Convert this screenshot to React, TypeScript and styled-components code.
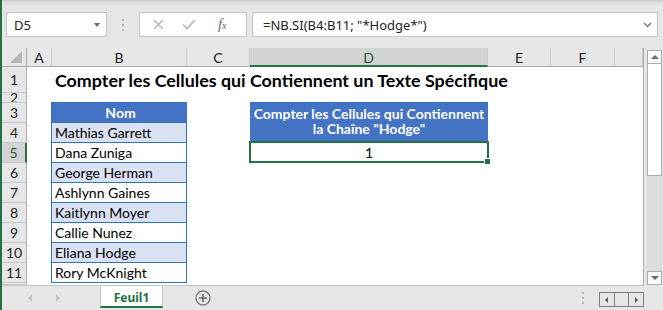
import React from "react";
import styled, { createGlobalStyle } from "styled-components";

const GREEN = "#217346";
const BLUE = "#2f75b5";
const HEAD_BG = "#e6e6e6";
const HEAD_SEL = "#d2d2d2";
const SEP = "#c8c8c8";
const CELL_FONT = `"Lato", "Liberation Sans", sans-serif`;
const UI_FONT = `"Noto Sans", "Open Sans", sans-serif`;

const Global = createGlobalStyle`
  html, body { margin: 0; padding: 0; overflow: hidden; background: #e6e6e6; }
  * { box-sizing: border-box; }
`;

const Window = styled.div`
  width: 663px;
  height: 310px;
  display: flex;
  background: #e6e6e6;
  overflow: hidden;
`;

const Edge = styled.div`
  width: 2px;
  flex: none;
  background: ${GREEN};
`;

const Main = styled.div`
  flex: 1;
  display: flex;
  flex-direction: column;
  min-width: 0;
`;

/* ---------- formula bar ---------- */
const FormulaBar = styled.div`
  height: 48px;
  flex: none;
  display: flex;
  align-items: flex-start;
  padding: 12px 0 0 4px;
  background: linear-gradient(to bottom, #c9c9c9 0px, #dadada 2px, #e6e6e6 5px);
`;

const Box = styled.div`
  height: 25px;
  background: #ffffff;
  border: 1px solid #c6c6c6;
  display: flex;
  align-items: center;
`;

const NameBox = styled(Box)`
  width: 101px;
  padding: 0 6px 0 7px;
  justify-content: space-between;
  font-family: ${UI_FONT};
  font-size: 13px;
  color: #222;
`;

const DropArrow = styled.span`
  width: 0;
  height: 0;
  border-left: 3.5px solid transparent;
  border-right: 3.5px solid transparent;
  border-top: 4px solid #6a6a6a;
  margin-top: 1px;
`;

const Grip = styled.div`
  width: 32px;
  height: 25px;
  display: flex;
  flex-direction: column;
  align-items: center;
  justify-content: center;
  gap: 3px;
`;

const GripDot = styled.span`
  width: 2px;
  height: 2px;
  background: #b4b4b4;
`;

const FuncBox = styled(Box)`
  width: 108px;
  padding-left: 12px;
  gap: 0;
`;

const FuncIcon = styled.span<{ $w: number }>`
  width: ${(p) => p.$w}px;
  height: 23px;
  display: flex;
  align-items: center;
  justify-content: center;
`;

const Fx = styled.span`
  font-family: "Liberation Serif", serif;
  font-style: italic;
  font-size: 15px;
  color: #6b6b6b;
  letter-spacing: -0.5px;
  & > small {
    font-size: 11px;
  }
`;

const FormulaInput = styled(Box)`
  margin-left: 5px;
  width: 406px;
  padding: 0 5px 0 10px;
  justify-content: space-between;
  font-family: ${UI_FONT};
  font-size: 13px;
  color: #222;
  white-space: pre;
`;

/* ---------- sheet ---------- */
const SheetArea = styled.div`
  height: 238px;
  flex: none;
  display: flex;
`;

const Grid = styled.div`
  width: 642px;
  height: 238px;
  flex: none;
  display: grid;
  grid-template-columns: 25px 25px 135px 63px 238px 63px 64px 1fr;
  grid-template-rows: 19px 26px 10px repeat(9, 20px) 1fr;
  background: #ffffff;
  border-right: 1px solid #ababab;
  border-bottom: 1px solid #c6c6c6;
  overflow: hidden;
`;

const Corner = styled.div`
  grid-column: 1;
  grid-row: 1;
  background: ${HEAD_BG};
  border-right: 1px solid #ababab;
  border-bottom: 1px solid #ababab;
  position: relative;
  display: flex;
  align-items: flex-end;
  justify-content: flex-end;
  padding: 0 4px 3px 0;
`;

const ColHeader = styled.div<{ $col: number; $sel?: boolean }>`
  grid-column: ${(p) => p.$col};
  grid-row: 1;
  background: ${(p) => (p.$sel ? HEAD_SEL : HEAD_BG)};
  border-right: 1px solid ${SEP};
  border-bottom: ${(p) => (p.$sel ? `2px solid ${GREEN}` : "1px solid #ababab")};
  display: flex;
  align-items: center;
  justify-content: center;
  font-family: ${CELL_FONT};
  font-size: 14px;
  color: ${(p) => (p.$sel ? "#1d5c38" : "#222")};
  padding-top: ${(p) => (p.$sel ? "1px" : "0")};
`;

const RowHeader = styled.div<{ $row: number; $sel?: boolean }>`
  grid-column: 1;
  grid-row: ${(p) => p.$row};
  background: ${(p) => (p.$sel ? HEAD_SEL : HEAD_BG)};
  border-bottom: 1px solid ${SEP};
  border-right: ${(p) => (p.$sel ? `2px solid ${GREEN}` : "1px solid #ababab")};
  display: flex;
  align-items: center;
  justify-content: center;
  overflow: hidden;
  font-family: ${CELL_FONT};
  font-size: 14px;
  line-height: 20px;
  color: ${(p) => (p.$sel ? "#1d5c38" : "#222")};
`;

const Title = styled.div`
  grid-column: 3 / 8;
  grid-row: 2;
  padding-left: 3px;
  font-family: ${CELL_FONT};
  font-weight: 700;
  font-size: 17.85px;
  line-height: 26px;
  color: #000;
  white-space: nowrap;
`;

const NameTable = styled.div`
  grid-column: 3;
  grid-row: 4 / span 9;
  margin: -1px 0 0 -1px;
  border: 1px solid ${BLUE};
  border-bottom: none;
  display: flex;
  flex-direction: column;
`;

const NameRow = styled.div<{ $kind: "head" | "band" | "plain" }>`
  height: 20px;
  flex: none;
  border-bottom: 1px solid ${BLUE};
  padding-left: 3px;
  font-family: ${CELL_FONT};
  font-size: 14px;
  line-height: 19px;
  white-space: nowrap;
  background: ${(p) => (p.$kind === "head" ? "#4472c4" : p.$kind === "band" ? "#d9e1f2" : "#ffffff")};
  color: ${(p) => (p.$kind === "head" ? "#ffffff" : "#000")};
  font-weight: ${(p) => (p.$kind === "head" ? 700 : 400)};
  text-align: ${(p) => (p.$kind === "head" ? "center" : "left")};
`;

const ResultHeader = styled.div`
  grid-column: 5;
  grid-row: 4 / span 2;
  margin-top: -1px;
  background: #4472c4;
  border-top: 1px solid ${BLUE};
  padding-top: 3px;
  font-family: ${CELL_FONT};
  font-weight: 700;
  font-size: 14px;
  line-height: 15px;
  color: #ffffff;
  text-align: center;
  white-space: nowrap;
`;

const ResultCell = styled.div`
  grid-column: 5;
  grid-row: 6;
  position: relative;
  font-family: ${CELL_FONT};
  font-size: 14px;
  line-height: 20px;
  text-align: center;
  color: #000;
`;

const Selection = styled.div`
  position: absolute;
  top: -2px;
  left: -1px;
  right: -1px;
  bottom: 0;
  border: 2px solid ${GREEN};
  pointer-events: none;
`;

const FillHandle = styled.span`
  position: absolute;
  right: -3px;
  bottom: -3px;
  width: 5px;
  height: 5px;
  background: ${GREEN};
  outline: 1px solid #ffffff;
`;

/* ---------- vertical scrollbar ---------- */
const VScroll = styled.div`
  width: 15px;
  height: 235px;
  margin: 2px 0 0 3px;
  display: flex;
  flex-direction: column;
  background: #dcdcdc;
`;

const ScrollButton = styled.div`
  height: 14px;
  flex: none;
  background: #fafafa;
  border: 1px solid #ababab;
  display: flex;
  align-items: center;
  justify-content: center;
`;

const ScrollThumb = styled.div`
  height: 113px;
  flex: none;
  margin-top: -1px;
  background: #ffffff;
  border: 1px solid #ababab;
`;

const ScrollTrack = styled.div`
  flex: 1;
`;

/* ---------- tab bar ---------- */
const TabBar = styled.div`
  flex: 1;
  display: flex;
  align-items: flex-start;
  font-family: ${UI_FONT};
`;

const NavArrows = styled.div`
  display: flex;
  gap: 20px;
  margin: 8px 0 0 24px;
`;

const Arrow = styled.span<{ $dir: "left" | "right"; $c: string; $s: number }>`
  width: 0;
  height: 0;
  border-top: ${(p) => p.$s}px solid transparent;
  border-bottom: ${(p) => p.$s}px solid transparent;
  ${(p) =>
    p.$dir === "left"
      ? `border-right: ${p.$s}px solid ${p.$c};`
      : `border-left: ${p.$s}px solid ${p.$c};`}
`;

const ArrowSlot = styled.span`
  width: 8px;
  height: 8px;
  display: flex;
  align-items: center;
  justify-content: center;
`;

const Tab = styled.div`
  margin-left: 38px;
  width: 63px;
  height: 22px;
  background: #ffffff;
  border-left: 1px solid #c6c6c6;
  border-right: 1px solid #c6c6c6;
  border-bottom: 2px solid ${GREEN};
  display: flex;
  align-items: center;
  justify-content: center;
  font-size: 12px;
  font-weight: 700;
  color: ${GREEN};
  padding-top: 2px;
`;

const AddSheet = styled.div`
  margin: 4px 0 0 32px;
  width: 16px;
  height: 16px;
  display: flex;
`;

const Spacer = styled.div`
  flex: 1;
`;

const VGrip = styled.div`
  margin-top: 6px;
  display: flex;
  flex-direction: column;
  gap: 3px;
`;

const NavBox = styled.div`
  margin: 6px 19px 0 15px;
  width: 45px;
  height: 15px;
  display: flex;
  border: 1px solid #7f7f7f;
`;

const NavCell = styled.div`
  flex: 1;
  display: flex;
  align-items: center;
  justify-content: center;
  & + & {
    border-left: 1px solid #7f7f7f;
  }
`;

const cols = ["A", "B", "C", "D", "E", "F", ""];
const names = [
  "Mathias Garrett",
  "Dana Zuniga",
  "George Herman",
  "Ashlynn Gaines",
  "Kaitlynn Moyer",
  "Callie Nunez",
  "Eliana Hodge",
  "Rory McKnight",
];

export default function App() {
  return (
    <>
      <Global />
      <Window>
        <Edge />
        <Main>
          <FormulaBar>
            <NameBox>
              <span>D5</span>
              <DropArrow />
            </NameBox>
            <Grip>
              <GripDot />
              <GripDot />
              <GripDot />
            </Grip>
            <FuncBox>
              <FuncIcon $w={12}>
                <svg width="11" height="11" viewBox="0 0 11 11">
                  <path d="M1 1 L10 10 M10 1 L1 10" stroke="#b5b5b5" strokeWidth="1.4" fill="none" />
                </svg>
              </FuncIcon>
              <FuncIcon $w={23} style={{ marginLeft: 13 }}>
                <svg width="14" height="11" viewBox="0 0 14 11">
                  <path d="M1 5.5 L5 9.5 L13 1" stroke="#b5b5b5" strokeWidth="1.6" fill="none" />
                </svg>
              </FuncIcon>
              <FuncIcon $w={20} style={{ marginLeft: 12 }}>
                <Fx>
                  f<small>x</small>
                </Fx>
              </FuncIcon>
            </FuncBox>
            <FormulaInput>
              <span>=NB.SI(B4:B11; "*Hodge*")</span>
              <svg width="9" height="6" viewBox="0 0 9 6">
                <path d="M1 1 L4.5 4.5 L8 1" stroke="#7a7a7a" strokeWidth="1.5" fill="none" />
              </svg>
            </FormulaInput>
          </FormulaBar>

          <SheetArea>
            <Grid>
              <Corner>
                <svg width="12" height="12" viewBox="0 0 12 12">
                  <path d="M12 0 L12 12 L0 12 Z" fill="#b9b9b9" />
                </svg>
              </Corner>
              {cols.map((c, i) => (
                <ColHeader key={i} $col={i + 2} $sel={c === "D"}>
                  {c}
                </ColHeader>
              ))}
              {Array.from({ length: 12 }, (_, i) => (
                <RowHeader key={i} $row={i + 2} $sel={i + 1 === 5}>
                  {i < 11 ? i + 1 : ""}
                </RowHeader>
              ))}
              <Title>Compter les Cellules qui Contiennent un Texte Spécifique</Title>
              <NameTable>
                <NameRow $kind="head">Nom</NameRow>
                {names.map((n, i) => (
                  <NameRow key={n} $kind={i % 2 === 0 ? "band" : "plain"}>
                    {n}
                  </NameRow>
                ))}
              </NameTable>
              <ResultHeader>
                Compter les Cellules qui Contiennent
                <br />
                la Chaîne "Hodge"
              </ResultHeader>
              <ResultCell>
                1
                <Selection>
                  <FillHandle />
                </Selection>
              </ResultCell>
            </Grid>
            <VScroll>
              <ScrollButton>
                <Arrow as="span" $dir="left" $c="#6a6a6a" $s={0} style={{ borderLeft: "4px solid transparent", borderRight: "4px solid transparent", borderBottom: "4px solid #6a6a6a", borderTop: "none" }} />
              </ScrollButton>
              <ScrollThumb />
              <ScrollTrack />
              <ScrollButton>
                <Arrow as="span" $dir="left" $c="#6a6a6a" $s={0} style={{ borderLeft: "4px solid transparent", borderRight: "4px solid transparent", borderTop: "4px solid #6a6a6a", borderBottom: "none" }} />
              </ScrollButton>
            </VScroll>
          </SheetArea>

          <TabBar>
            <NavArrows>
              <ArrowSlot>
                <Arrow $dir="left" $c="#c3c3c3" $s={4} />
              </ArrowSlot>
              <ArrowSlot>
                <Arrow $dir="right" $c="#c3c3c3" $s={4} />
              </ArrowSlot>
            </NavArrows>
            <Tab>Feuil1</Tab>
            <AddSheet>
              <svg width="16" height="16" viewBox="0 0 16 16">
                <circle cx="8" cy="8" r="7" stroke="#7a7a7a" strokeWidth="1.3" fill="none" />
                <path d="M8 4 V12 M4 8 H12" stroke="#6a6a6a" strokeWidth="1.6" />
              </svg>
            </AddSheet>
            <Spacer />
            <VGrip>
              <GripDot />
              <GripDot />
              <GripDot />
            </VGrip>
            <NavBox>
              <NavCell>
                <Arrow $dir="left" $c="#5a5a5a" $s={3} />
              </NavCell>
              <NavCell />
              <NavCell>
                <Arrow $dir="right" $c="#5a5a5a" $s={3} />
              </NavCell>
            </NavBox>
          </TabBar>
        </Main>
      </Window>
    </>
  );
}
